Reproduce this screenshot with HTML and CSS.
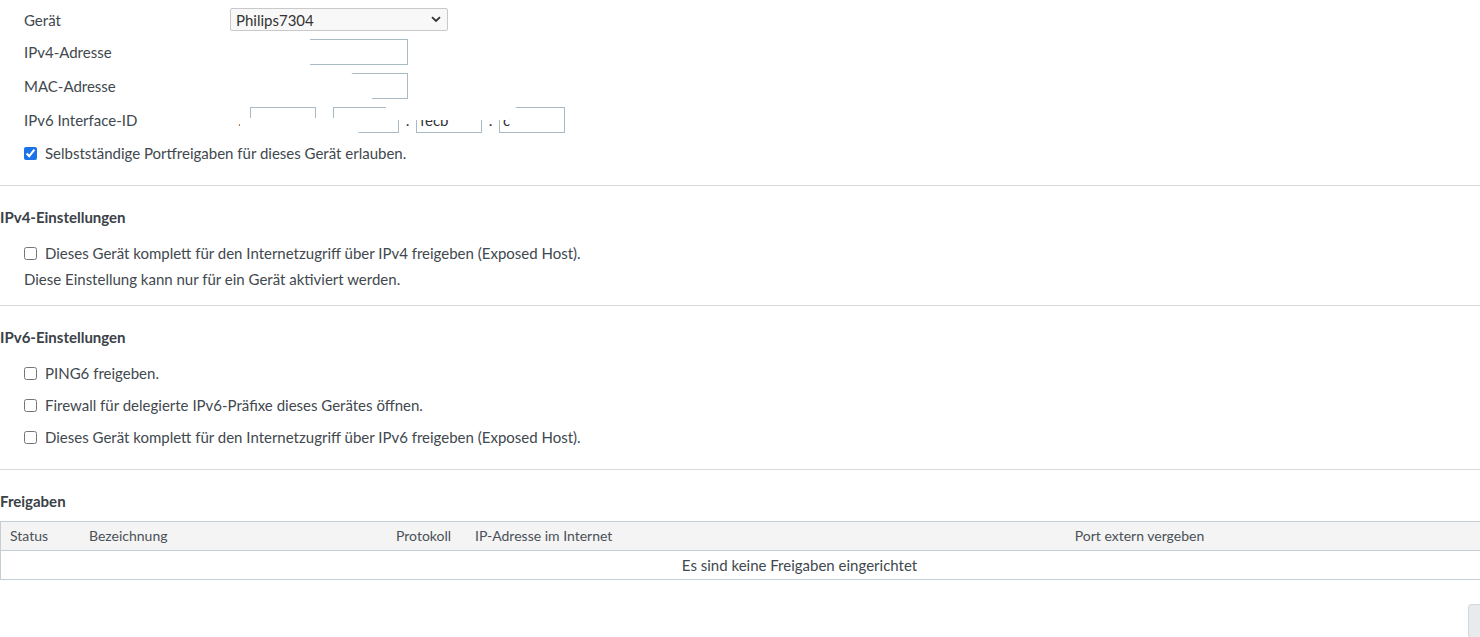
FILE: index.html
```html
<!DOCTYPE html>
<html lang="de">
<head>
<meta charset="utf-8">
<link rel="stylesheet" href="styles.css">
</head>
<body>
<div class="page">
  <div class="form">
    <div class="row first-row">
      <label class="lbl">Gerät</label>
      <div class="select">
        <span>Philips7304</span>
        <svg class="chev" width="10" height="7" viewBox="0 0 10 7"><path d="M1 1.2 L5 5 L9 1.2" fill="none" stroke="#333" stroke-width="1.8"/></svg>
      </div>
    </div>
    <div class="row">
      <label class="lbl">IPv4-Adresse</label>
      <div class="input w177"></div>
    </div>
    <div class="row">
      <label class="lbl">MAC-Adresse</label>
      <div class="input w177"></div>
    </div>
    <div class="row">
      <label class="lbl">IPv6 Interface-ID</label>
      <div class="v6">
        <span class="sep">:</span>
        <div class="input w65"></div>
        <span class="sep">:</span>
        <div class="input w65"></div>
        <span class="sep">:</span>
        <div class="input w65 txt">fecb</div>
        <span class="sep">:</span>
        <div class="input w65 txt">c</div>
      </div>
    </div>
    <div class="check first"><input type="checkbox" checked><span>Selbstständige Portfreigaben für dieses Gerät erlauben.</span></div>

    <div class="redact r1"></div>
    <div class="redact r2"></div>
    <div class="redact r3"></div>
    <div class="redact r4"></div>
    <div class="redact r5"></div>
    <div class="redact r6"></div>
  </div>

  <hr class="sep-line">

  <section class="sec">
    <h3>IPv4-Einstellungen</h3>
    <div class="check"><input type="checkbox"><span>Dieses Gerät komplett für den Internetzugriff über IPv4 freigeben (Exposed Host).</span></div>
    <p class="note">Diese Einstellung kann nur für ein Gerät aktiviert werden.</p>
  </section>

  <hr class="sep-line">

  <section class="sec v6sec">
    <h3>IPv6-Einstellungen</h3>
    <div class="check"><input type="checkbox"><span>PING6 freigeben.</span></div>
    <div class="check"><input type="checkbox"><span>Firewall für delegierte IPv6-Präfixe dieses Gerätes öffnen.</span></div>
    <div class="check"><input type="checkbox"><span>Dieses Gerät komplett für den Internetzugriff über IPv6 freigeben (Exposed Host).</span></div>
  </section>

  <hr class="sep-line">

  <section class="sec fg">
    <h3>Freigaben</h3>
    <table class="tbl">
      <thead>
        <tr>
          <th class="c-status">Status</th>
          <th class="c-name">Bezeichnung</th>
          <th class="c-proto">Protokoll</th>
          <th class="c-ip">IP-Adresse im Internet</th>
          <th class="c-port">Port extern vergeben</th>
          <th class="c-rest"></th>
        </tr>
      </thead>
      <tbody>
        <tr><td colspan="6" class="empty">Es sind keine Freigaben eingerichtet</td></tr>
      </tbody>
    </table>
    <div class="actions"><button class="btn" type="button"></button></div>
  </section>
</div>
</body>
</html>
```
FILE: styles.css
```css
html, body { margin: 0; padding: 0; overflow: hidden; background: #fff; }
body {
  font-family: "Lato", "Liberation Sans", sans-serif;
  font-size: 15px;
  color: #41484e;
  width: 1480px;
  height: 637px;
}
.page { width: 1480px; }

.form { position: relative; padding-left: 24px; padding-top: 8px; }
.row { display: flex; align-items: center; height: 26px; margin-bottom: 8px; }
.row.first-row { height: 23px; }
.lbl { width: 206px; flex: none; line-height: 20px; }
.select {
  box-sizing: border-box; width: 218px; height: 23px;
  border: 1px solid #c9c9c9; border-radius: 2px;
  background: #f8f8f8;
  display: flex; align-items: center; justify-content: space-between;
  padding: 0 6px 0 5px;
}
.select span { color: #333; }
.input {
  height: 26px; box-sizing: border-box;
  border: 1px solid #a9bac4; background: #fff;
}
.w177 { width: 178px; }
.w65 { width: 66px; }
.txt { line-height: 24px; padding-left: 3px; color: #333; }
.v6 { display: flex; align-items: center; }
.v6 .sep { width: 17px; text-align: center; color: #333; line-height: 26px; }
.v6 .sep:first-child { width: 20px; }

.check { display: flex; align-items: center; height: 20px; line-height: 20px; }
.check input {
  margin: 0 8px 0 0; width: 13px; height: 13px; flex: none;
  accent-color: #1a73e8;
}
.form .row:nth-child(4) { margin-bottom: 0; }
.check.first { margin-top: 10px; }

.redact { position: absolute; background: #fff; }
.r1 { left: 228px; top: 37px; width: 82px; height: 30px; }
.r2 { left: 228px; top: 71px; width: 126px; height: 16px; border-radius: 0 10px 10px 0; }
.r3 { left: 228px; top: 86px; width: 146px; height: 15px; border-radius: 0 8px 8px 0; }
.r4 { left: 228px; top: 104px; width: 22px; height: 16px; }
.r5 { left: 240px; top: 118px; width: 122px; height: 18px; border-radius: 0 0 12px 0; }
.r6 { left: 386px; top: 103px; width: 130px; height: 17px; border-radius: 0 0 8px 0; }

.sep-line { border: 0; border-top: 1px solid #d9d9d9; margin: 0; width: 1480px; }
.form + .sep-line { margin-top: 22px; }

.sec h3 {
  margin: 0; font-size: 15px; font-weight: 700; line-height: 20px;
  color: #3a4147; padding-top: 21px;
}
.sec .check, .sec .note { margin-left: 24px; }
.sec h3 + .check { margin-top: 16px; }
.note { margin: 6px 0 0; line-height: 20px; }
.sec { padding-bottom: 16px; }
.v6sec .check + .check { margin-top: 12px; }
.v6sec { padding-bottom: 22px; }

.fg h3 { padding-bottom: 10px; }
.tbl { border-collapse: collapse; width: 1480px; table-layout: fixed; }
.tbl th {
  background: #f4f4f4; font-weight: 400; text-align: left;
  height: 28px; padding: 0 0 0 9px; color: #4a5157;
  border-top: 1px solid #c5ced4; border-bottom: 1px solid #c5ced4;
  line-height: 20px; font-size: 14px;
}
.tbl th:first-child, .tbl td:first-child { border-left: 1px solid #c5ced4; }
.c-status { width: 70px; }
.c-name { width: 298px; }
.c-proto { width: 70px; }
.c-ip { width: 491px; }
.c-port { width: 329px; text-align: center !important; }
.tbl td {
  height: 28px; border-bottom: 1px solid #c5ced4; padding: 0;
  line-height: 20px; font-size: 15px;
}
.tbl td.empty { text-align: center; padding-left: 118px; }
.actions { display: flex; justify-content: flex-end; margin-top: 24px; }
.btn {
  width: 12px; height: 34px; margin-right: -1px;
  border: 1px solid #d3d8dc; border-radius: 4px 0 0 4px; border-right: 0; background: #e8ebee;
}
```
